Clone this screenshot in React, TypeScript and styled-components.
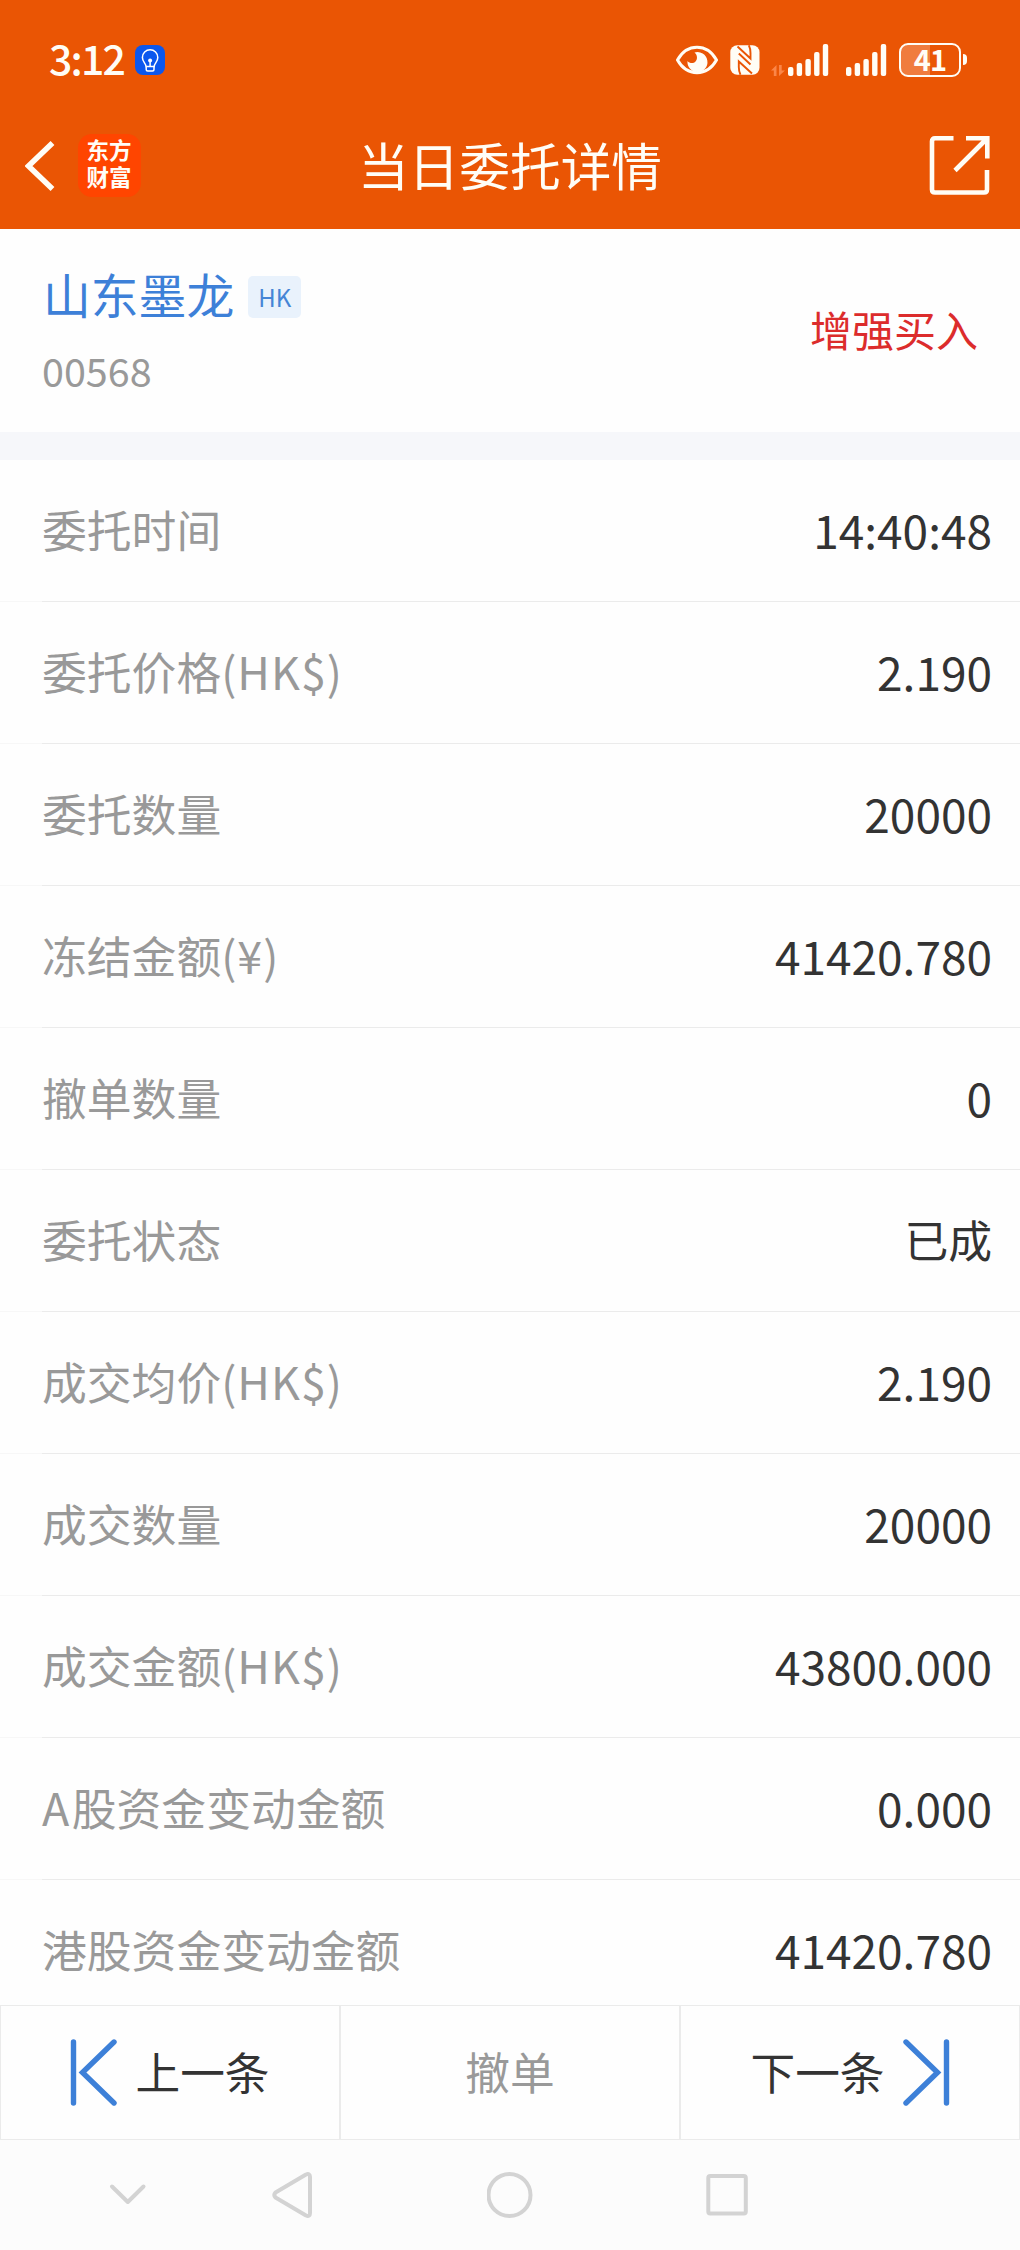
import React from "react";
import styled, { createGlobalStyle } from "styled-components";

const Global = createGlobalStyle`
  *, *::before, *::after { box-sizing: border-box; }
  body {
    margin: 0;
    background: #fefefe;
    font-family: "Noto Sans CJK SC", "Noto Sans", sans-serif;
    color: #333;
  }
  svg { display: block; flex: none; }
`;

const Screen = styled.div`
  width: 1020px;
  height: 2250px;
  display: flex;
  flex-direction: column;
  overflow: hidden;
  white-space: nowrap;
`;

const Header = styled.header`
  flex: none;
  height: 229px;
  background: #ea5504;
  color: #fffdf6;
  display: flex;
  flex-direction: column;
`;

const StatusBar = styled.div`
  height: 102px;
  padding: 17px 53px 0 48px;
  display: flex;
  align-items: center;
`;

const Clock = styled.span`
  font-size: 41px;
  font-weight: 500;
  line-height: 50px;
  padding: 0 0 5px 1px;
  letter-spacing: -1.8px;
  width: 87px;
`;

const StatusIcons = styled.div`
  margin-left: auto;
  display: flex;
  align-items: center;
`;

const StatusItem = styled.div<{ $gap: number }>`
  margin-left: ${(p) => p.$gap}px;
`;

const BatteryBox = styled.div`
  display: flex;
  align-items: center;
  gap: 2px;
`;

const BatteryBody = styled.div`
  width: 62px;
  height: 34px;
  border: 2px solid #fffdf6;
  border-radius: 9px;
  background: linear-gradient(to right, #f07c3e 29px, transparent 29px);
  font-size: 29px;
  font-weight: 700;
  line-height: 26px;
  text-align: center;
  letter-spacing: -0.8px;
`;

const BatteryCap = styled.div`
  width: 4px;
  height: 11px;
  border-radius: 0 4px 4px 0;
  background: #fffdf6;
`;

const TitleBar = styled.div`
  height: 127px;
  padding: 0 30px 0 25px;
  display: grid;
  grid-template-columns: 240px 1fr 235px;
  align-items: center;
`;

const TitleLeft = styled.div`
  display: flex;
  align-items: center;
  gap: 23px;
`;

const Logo = styled.div`
  width: 63px;
  height: 63px;
  padding: 0 1px 3px 0;
  border-radius: 14px;
  background: #ff4500;
  display: flex;
  flex-direction: column;
  align-items: center;
  justify-content: center;
  font-family: "Noto Sans", "Noto Sans CJK SC", sans-serif;
  font-size: 22.5px;
  font-weight: 700;
  line-height: 27px;
`;

const Title = styled.h1`
  margin: 0;
  padding-bottom: 4px;
  text-align: center;
  font-size: 50.7px;
  font-weight: 400;
  line-height: 60px;
`;

const TitleRight = styled.div`
  display: flex;
  justify-content: flex-end;
`;

const Stock = styled.section`
  flex: none;
  height: 203px;
  padding: 0 42px;
  display: flex;
  align-items: center;
  justify-content: space-between;
`;

const StockInfo = styled.div`
  display: flex;
  flex-direction: column;
  gap: 19px;
`;

const NameLine = styled.div`
  display: flex;
  align-items: center;
  gap: 14px;
`;

const StockName = styled.span`
  font-size: 47.8px;
  line-height: 60px;
  color: #3d80d8;
  padding-left: 1px;
`;

const Market = styled.span`
  width: 53px;
  height: 42px;
  margin-top: 6px;
  border-radius: 5px;
  background: #e9f2fc;
  color: #4585d6;
  font-size: 24px;
  line-height: 42px;
  text-align: center;
`;

const Code = styled.span`
  font-size: 39.5px;
  line-height: 54px;
  color: #999;
`;

const Side = styled.span`
  padding-bottom: 3px;
  font-size: 42px;
  line-height: 50px;
  color: #dc2c2c;
`;

const Band = styled.div`
  flex: none;
  height: 28px;
  background: #f6f7fa;
`;

const List = styled.dl`
  margin: 0;
  flex: 1;
  min-height: 0;
  overflow: hidden;
`;

const Row = styled.div`
  height: 142px;
  padding: 0 28px 4px 42px;
  display: flex;
  align-items: center;
  justify-content: space-between;
  background: linear-gradient(to right, #f7f7f7 42px, #ebebeb 42px) bottom / 100% 1px no-repeat;
`;

const Label = styled.dt`
  font-size: 44.8px;
  line-height: 60px;
  color: #999;
`;

const Latin = styled.span<{ $spacing: number }>`
  letter-spacing: ${(p) => p.$spacing}px;
`;

const Value = styled.dd<{ $word?: boolean }>`
  margin: 0;
  font-size: ${(p) => (p.$word ? 43.8 : 46)}px;
  line-height: 60px;
  color: #333;
`;

const Actions = styled.div`
  flex: none;
  height: 135px;
  display: grid;
  grid-template-columns: repeat(3, 340px);
`;

const Action = styled.button<{ $muted?: boolean }>`
  appearance: none;
  margin: 0;
  padding: 0;
  border: 1px solid #ebebeb;
  border-radius: 0;
  background: #fefefe;
  color: ${(p) => (p.$muted ? "#999" : "#333")};
  font: inherit;
  font-size: 44.7px;
  line-height: 60px;
  display: flex;
  align-items: center;
  justify-content: center;
  gap: 18px;
`;

const ActionText = styled.span`
  padding-bottom: 4px;
`;

const NavBar = styled.nav`
  flex: none;
  height: 110px;
  padding-left: 106px;
  background: #fcfcfc;
  display: flex;
  align-items: center;
`;

const NavItem = styled.div<{ $gap?: number }>`
  margin-left: ${(p) => p.$gap ?? 0}px;
`;

const rows: { lead?: string; label: string; unit?: string; value: string; word?: boolean }[] = [
  { label: "委托时间", value: "14:40:48" },
  { label: "委托价格", unit: "(HK$)", value: "2.190" },
  { label: "委托数量", value: "20000" },
  { label: "冻结金额", unit: "(¥)", value: "41420.780" },
  { label: "撤单数量", value: "0" },
  { label: "委托状态", value: "已成", word: true },
  { label: "成交均价", unit: "(HK$)", value: "2.190" },
  { label: "成交数量", value: "20000" },
  { label: "成交金额", unit: "(HK$)", value: "43800.000" },
  { lead: "A", label: "股资金变动金额", value: "0.000" },
  { label: "港股资金变动金额", value: "41420.780" },
];

const BulbBadge = () => (
  <svg width="30" height="30" viewBox="0 0 30 30" fill="none">
    <rect width="30" height="30" rx="8" fill="#0b57ee" />
    <path d="M11 21.5c0-3-3.600-4.600-3.600-9a7.700 7.700 0 0 1 15.400 0c0 4.400-3.600 6-3.600 9z" stroke="#fff" strokeWidth="1.500" />
    <path d="M11.200 22v2.500q0 1.500 1.500 1.500h4.800q1.500 0 1.500-1.500V22M15.100 16v5.500" stroke="#fff" strokeWidth="1.500" />
    <circle cx="15.100" cy="15.500" r="2" fill="#fff" />
  </svg>
);

const Eye = () => (
  <svg width="42" height="30" viewBox="0 0 42 30" fill="none">
    <path d="M1.500 15C6 7 13 2.300 21 2.300S36 7 40.500 15C36 23 29 27.700 21 27.700S6 23 1.500 15z" stroke="#fffdf6" strokeWidth="3" />
    <path d="M18.500 7.500a10 10 0 1 1-7 8.500c2 2.500 6 2.700 8 .5 2.300-2.500 2-6.500-1-9z" fill="#fffdf6" />
  </svg>
);

const Nfc = () => (
  <svg width="30" height="30" viewBox="0 0 30 30">
    <rect x=".3" y=".3" width="29.200" height="29.500" rx="7" fill="#fffdf6" />
    <path
      d="M7.500 1.500L20.500 13.500V8Q20.500 3.500 18.800 .3M8.800 8.500L20.500 19.500M22 28.500L8.800 16.500V22Q8.800 26.500 10.500 29.700"
      fill="none"
      stroke="#ea5504"
      strokeWidth="1.900"
    />
  </svg>
);

const bars = [9, 13, 17, 24, 32];

const Signal = ({ data }: { data?: boolean }) => {
  const left = data ? 17 : 0;
  return (
    <svg width={left + 41} height="34" viewBox={`0 0 ${left + 41} 34`}>
      {data && (
        <path d="M0 27.500L5.500 22V33H2.800V27.500zM8 22H10.700V27.500H14L8 33z" fill="#fb8648" />
      )}
      {bars.map((h, i) => (
        <rect key={h} x={left + i * 8.7} y={33 - h} width="5.400" height={h} rx="2" fill="#fffdf6" />
      ))}
    </svg>
  );
};

const Battery = () => (
  <BatteryBox>
    <BatteryBody>41</BatteryBody>
    <BatteryCap />
  </BatteryBox>
);

const Back = () => (
  <svg width="30" height="52" viewBox="0 0 30 52" fill="none">
    <path d="M27.500 3L3.500 26l24 23" stroke="#fffdf6" strokeWidth="5.500" />
  </svg>
);

const Share = () => (
  <svg width="61" height="61" viewBox="0 0 61 61" fill="none" stroke="#fffdf6" strokeWidth="4.600">
    <path d="M24.500 3.300H6q-3 0-3 3V54.500q0 3 3 3H55q3 0 3-3V35M37 3.300H58.300V23.500M58 3.500L26 35.500" />
  </svg>
);

const Skip = ({ next }: { next?: boolean }) => (
  <svg width="47" height="67" viewBox="0 0 47 67" fill="none" stroke="#3d80d8" strokeWidth="5.400" strokeLinecap="round">
    <path d={next ? "M3 3L34.500 33.500L3 64M43.500 3V64" : "M44 3L12.500 33.500L44 64M3.500 3V64"} />
  </svg>
);

const nav = { fill: "none", stroke: "#d3d3d3", strokeWidth: 4, strokeLinecap: "round", strokeLinejoin: "round" } as const;

export default function App() {
  return (
    <>
      <Global />
      <Screen>
        <Header>
          <StatusBar>
            <Clock>3:12</Clock>
            <BulbBadge />
            <StatusIcons>
              <Eye />
              <StatusItem $gap={12}><Nfc /></StatusItem>
              <StatusItem $gap={11}><Signal data /></StatusItem>
              <StatusItem $gap={17}><Signal /></StatusItem>
              <StatusItem $gap={12}><Battery /></StatusItem>
            </StatusIcons>
          </StatusBar>
          <TitleBar>
            <TitleLeft>
              <Back />
              <Logo>
                <span>东方</span>
                <span>财富</span>
              </Logo>
            </TitleLeft>
            <Title>当日委托详情</Title>
            <TitleRight><Share /></TitleRight>
          </TitleBar>
        </Header>
        <Stock>
          <StockInfo>
            <NameLine>
              <StockName>山东墨龙</StockName>
              <Market>HK</Market>
            </NameLine>
            <Code>00568</Code>
          </StockInfo>
          <Side>增强买入</Side>
        </Stock>
        <Band />
        <List>
          {rows.map((r) => (
            <Row key={r.label}>
              <Label>
                {r.lead && <Latin $spacing={2.5}>{r.lead}</Latin>}
                {r.label}
                {r.unit && <Latin $spacing={1}>{r.unit}</Latin>}
              </Label>
              <Value $word={r.word}>{r.value}</Value>
            </Row>
          ))}
        </List>
        <Actions>
          <Action>
            <Skip />
            <ActionText>上一条</ActionText>
          </Action>
          <Action $muted>
            <ActionText>撤单</ActionText>
          </Action>
          <Action>
            <ActionText>下一条</ActionText>
            <Skip next />
          </Action>
        </Actions>
        <NavBar>
          <NavItem>
            <svg width="44" height="50" viewBox="0 0 44 50" {...nav}><path d="M6 16.500L21.800 32L37.500 16.500" /></svg>
          </NavItem>
          <NavItem $gap={121}>
            <svg width="44" height="50" viewBox="0 0 44 50" {...nav}><path d="M4.500 22.500L35 4.500Q39 3 39 7V43Q39 47 35 45.500L4.500 27.500Q2 25 4.500 22.500z" /></svg>
          </NavItem>
          <NavItem $gap={172}>
            <svg width="50" height="50" viewBox="0 0 50 50" {...nav}><circle cx="22.500" cy="25" r="21" /></svg>
          </NavItem>
          <NavItem $gap={167}>
            <svg width="50" height="50" viewBox="0 0 50 50" {...nav}><rect x="4.300" y="6" width="37.500" height="37.500" rx="2" /></svg>
          </NavItem>
        </NavBar>
      </Screen>
    </>
  );
}
